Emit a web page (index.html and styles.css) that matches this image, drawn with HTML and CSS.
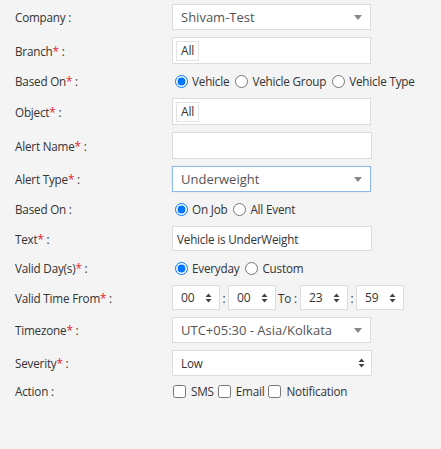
FILE: index.html
```html
<!DOCTYPE html>
<html>
<head>
<meta charset="utf-8">
<link rel="stylesheet" href="styles.css">
</head>
<body>
<form class="form">
  <div class="row h26">
    <div class="label">Company :</div>
    <div class="ctrl">
      <div class="box chosen"><span class="val">Shivam-Test</span><svg class="tri" width="8" height="5" viewBox="0 0 8 5"><path d="M0 0H8L4 5Z" fill="#888"/></svg></div>
    </div>
  </div>
  <div class="row h27">
    <div class="label">Branch<span class="req">*</span> :</div>
    <div class="ctrl">
      <div class="box multi"><span class="chip">All</span></div>
    </div>
  </div>
  <div class="row h20">
    <div class="label">Based On<span class="req">*</span> :</div>
    <div class="ctrl opts">
      <label class="opt"><input type="radio" name="b1" checked>Vehicle</label>
      <label class="opt"><input type="radio" name="b1">Vehicle Group</label>
      <label class="opt"><input type="radio" name="b1">Vehicle Type</label>
    </div>
  </div>
  <div class="row h27">
    <div class="label">Object<span class="req">*</span> :</div>
    <div class="ctrl">
      <div class="box multi"><span class="chip">All</span></div>
    </div>
  </div>
  <div class="row h27">
    <div class="label">Alert Name<span class="req">*</span> :</div>
    <div class="ctrl">
      <div class="box plain wide"></div>
    </div>
  </div>
  <div class="row h26">
    <div class="label">Alert Type<span class="req">*</span> :</div>
    <div class="ctrl">
      <div class="box chosen focus"><span class="val">Underweight</span><svg class="tri" width="8" height="5" viewBox="0 0 8 5"><path d="M0 0H8L4 5Z" fill="#888"/></svg></div>
    </div>
  </div>
  <div class="row h20">
    <div class="label">Based On :</div>
    <div class="ctrl opts">
      <label class="opt"><input type="radio" name="b2" checked>On Job</label>
      <label class="opt"><input type="radio" name="b2">All Event</label>
    </div>
  </div>
  <div class="row h25">
    <div class="label">Text<span class="req">*</span> :</div>
    <div class="ctrl">
      <div class="box plain wide"><span class="txt">Vehicle is UnderWeight</span></div>
    </div>
  </div>
  <div class="row h20">
    <div class="label">Valid Day(s)<span class="req">*</span> :</div>
    <div class="ctrl opts">
      <label class="opt"><input type="radio" name="b3" checked>Everyday</label>
      <label class="opt"><input type="radio" name="b3">Custom</label>
    </div>
  </div>
  <div class="row h25">
    <div class="label">Valid Time From<span class="req">*</span> :</div>
    <div class="ctrl times">
      <div class="box spin"><span class="sval">00</span><svg class="updown" width="7" height="10" viewBox="0 0 7 10"><path d="M0.5 4H6.5L3.5 0.5Z M0.5 6H6.5L3.5 9.5Z" fill="#444"/></svg></div>
      <span class="sep">:</span>
      <div class="box spin"><span class="sval">00</span><svg class="updown" width="7" height="10" viewBox="0 0 7 10"><path d="M0.5 4H6.5L3.5 0.5Z M0.5 6H6.5L3.5 9.5Z" fill="#444"/></svg></div>
      <span class="to">To :</span>
      <div class="box spin"><span class="sval">23</span><svg class="updown" width="7" height="10" viewBox="0 0 7 10"><path d="M0.5 4H6.5L3.5 0.5Z M0.5 6H6.5L3.5 9.5Z" fill="#444"/></svg></div>
      <span class="sep">:</span>
      <div class="box spin"><span class="sval">59</span><svg class="updown" width="7" height="10" viewBox="0 0 7 10"><path d="M0.5 4H6.5L3.5 0.5Z M0.5 6H6.5L3.5 9.5Z" fill="#444"/></svg></div>
    </div>
  </div>
  <div class="row h26">
    <div class="label">Timezone<span class="req">*</span> :</div>
    <div class="ctrl">
      <div class="box chosen"><span class="val">UTC+05:30 - Asia/Kolkata</span><svg class="tri" width="8" height="5" viewBox="0 0 8 5"><path d="M0 0H8L4 5Z" fill="#888"/></svg></div>
    </div>
  </div>
  <div class="row h26">
    <div class="label">Severity<span class="req">*</span> :</div>
    <div class="ctrl">
      <div class="box plain wide sel"><span class="txt">Low</span><svg class="updown" width="7" height="10" viewBox="0 0 7 10"><path d="M0.5 4H6.5L3.5 0.5Z M0.5 6H6.5L3.5 9.5Z" fill="#444"/></svg></div>
    </div>
  </div>
  <div class="row h16">
    <div class="label">Action :</div>
    <div class="ctrl opts checks">
      <label class="opt"><input type="checkbox">SMS</label>
      <label class="opt"><input type="checkbox">Email</label>
      <label class="opt"><input type="checkbox">Notification</label>
    </div>
  </div>
</form>
</body>
</html>
```

FILE: styles.css
```css
html, body {
  margin: 0;
  padding: 0;
  background: #f4f4f4;
  width: 441px;
  height: 449px;
  overflow: hidden;
}
body {
  font-family: "Open Sans", "Liberation Sans", sans-serif;
  font-size: 11.7px;
  letter-spacing: -0.2px;
  color: #333;
}
.form {
  display: flex;
  flex-direction: column;
  gap: 7px;
  padding-top: 4px;
}
.row {
  display: flex;
  align-items: center;
}
.h16 { height: 16px; }
.h20 { height: 20px; }
.h25 { height: 25px; }
.h26 { height: 26px; }
.h27 { height: 27px; }
.label {
  width: 157px;
  padding-left: 15px;
  flex: none;
  white-space: nowrap;
}
.req {
  color: #e8222a;
}
.ctrl {
  display: flex;
  align-items: center;
  height: 100%;
}
.box {
  box-sizing: border-box;
  height: 100%;
  background: #fff;
  border: 1px solid #dcdcdc;
  display: flex;
  align-items: center;
}
.chosen {
  width: 199px;
  padding: 0 8px 0 8px;
  justify-content: space-between;
  font-size: 13px;
  letter-spacing: 0;
  color: #555;
}
.chosen.focus {
  border-color: #8fb8ec;
  box-shadow: 0 0 1px #a9c8f0;
}
.tri {
  display: block;
  margin-top: 1px;
}
.multi {
  width: 199px;
  padding: 3px;
}
.chip {
  box-sizing: border-box;
  height: 20px;
  padding: 0 4px;
  border: 1px solid #e3e3e3;
  display: flex;
  align-items: center;
  font-size: 12px;
  color: #333;
}
.plain {
  padding: 0 4px;
}
.wide {
  width: 200px;
}
.txt {
  color: #333;
}
.sel {
  justify-content: space-between;
  padding: 0 6px 0 8px;
}
.opts {
  gap: 3px;
}
.opt {
  display: flex;
  align-items: center;
  white-space: nowrap;
}
.opt input {
  margin: 0 4px 0 3px;
  width: 13px;
  height: 13px;
}
.checks {
  gap: 4px;
}
.checks .opt input {
  margin: 0 5px 0 0;
}
.checks .opt:first-child input {
  margin-left: 1px;
}
.times {
  gap: 0;
}
.spin {
  width: 48px;
  padding: 0 7px 0 8px;
  justify-content: space-between;
  font-size: 12px;
  letter-spacing: 0;
}
.updown {
  display: block;
}
.sep {
  width: 8px;
  text-align: center;
}
.to {
  width: 24px;
  padding-left: 2px;
  box-sizing: border-box;
}
```
